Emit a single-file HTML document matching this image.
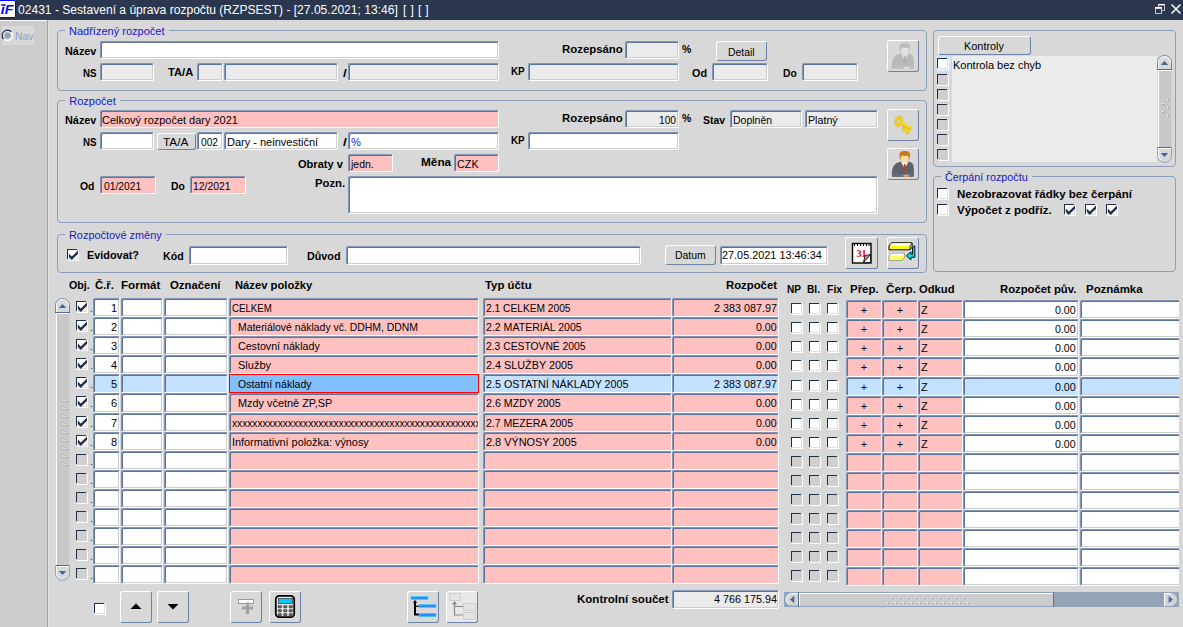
<!DOCTYPE html><html lang="cs"><head><meta charset="utf-8"><title>02431 - Sestavení a úprava rozpočtu</title><style>
*{box-sizing:border-box;margin:0;padding:0}
html,body{width:1183px;height:627px;overflow:hidden;background:#d8d8d8;font-family:"Liberation Sans",sans-serif;font-size:11px;color:#000}
.a{position:absolute}
#tt{left:18px;top:3px;color:#fff;font-size:12px;white-space:pre;line-height:14px}
.fr{border:1px solid #8c9db8;border-radius:4px}
.ft{color:#1616c8;background:#d8d8d8;padding:0 4px;line-height:13px;white-space:nowrap}
.l{font-weight:bold;white-space:nowrap;line-height:13px}
.f{background:#fff;border:1px solid;border-color:#8297b7 #fff #fff #8297b7;border-radius:2px;box-shadow:inset 1px 1px 0 #5b7397,inset -1px -1px 0 #cdcdcd;white-space:nowrap;overflow:hidden;line-height:13px;padding:3px 0 0 2px}
.d{background:#ebebeb}
.p{background:#ffc0c0;box-shadow:inset 1px 1px 0 #5b7397}
.s{background:#c4e1ff;box-shadow:inset 1px 1px 0 #5b7397}
.cl{border-right:0;border-radius:2px 0 0 2px;box-shadow:inset 1px 1px 0 #5b7397,inset 0 -1px 0 #cdcdcd}
.cur{background:#80c0ff;border:1px solid #f00;border-radius:0;box-shadow:none}
.n{text-align:right;padding-right:2px}
.bt{background:#d8d8d8;border:1px solid;border-color:#fff #6b82a6 #6b82a6 #fff;border-radius:3px;text-align:center;line-height:13px;white-space:nowrap}
.cb{width:12px;height:12px;background:linear-gradient(#222f48,#222f48) 0 0/10px 1px no-repeat,linear-gradient(#222f48,#222f48) 0 0/1px 10px no-repeat,linear-gradient(#fff,#fff) 1px 1px/9px 9px no-repeat,linear-gradient(#dedede,#dedede) 1px 1px/10px 10px no-repeat,linear-gradient(#fff,#fff) 1px 1px/11px 11px no-repeat}
.cbd{background:linear-gradient(#222f48,#222f48) 0 0/10px 1px no-repeat,linear-gradient(#222f48,#222f48) 0 0/1px 10px no-repeat,linear-gradient(#cfcfcf,#cfcfcf) 1px 1px/10px 10px no-repeat,linear-gradient(#fff,#fff) 1px 1px/11px 11px no-repeat}
.cb svg{position:absolute;left:1px;top:1px}
.t{white-space:nowrap;line-height:13px}
.c{transform-origin:0 50%;display:inline-block}
svg{display:block}
</style></head><body>
<div class="a " style="left:0px;top:0px;width:1183px;height:20px;background:#2a374e"></div>
<div class="a" id="tt" style="left:17.700px;transform-origin:0 50%;transform:scaleX(1.006)">02431 - Sestavení a úprava rozpočtu (RZPSEST) - [27.05.2021; 13:46]</div>
<div class="a" id="tt2" style="left:403.100px;top:3px;color:#fff;font-size:12px;white-space:pre;line-height:14px;letter-spacing:0.370px">[ ] [ ]</div>
<svg class="a" style="left:0px;top:0px" width="17" height="18" viewBox="0 0 17 18" ><rect x="0" y="0" width="16" height="18" fill="#fafaf2"/><path d="M0 0.500H15.500V17.500H0" fill="none" stroke="#0000ff" stroke-width="1"/><text x="0.800" y="14.300" font-family="Liberation Sans,sans-serif" font-size="13" font-weight="bold" font-style="italic" fill="#0808f0" textLength="12.500" lengthAdjust="spacingAndGlyphs">iF</text><path d="M1 4.900h4.500" stroke="#0808f0" stroke-width="1.300"/></svg>
<svg class="a" style="left:1150px;top:0px" width="33" height="20" viewBox="0 0 33 20" ><g fill="none"><path d="M8.500 5.500V10.500H14.500V5.500" stroke="#c4c4c4" stroke-width="1"/><path d="M8 4.700H15" stroke="#fff" stroke-width="1.500"/><rect x="5.500" y="8.500" width="6" height="5" fill="#2a374e" stroke="#c4c4c4" stroke-width="1"/><path d="M5 7.700H12" stroke="#fff" stroke-width="1.500"/><path d="M21.500 4.500l9 9M30.500 4.500l-9 9" stroke="#fff" stroke-width="1.500"/></g></svg>
<div class="a " style="left:0px;top:20px;width:47px;height:607px;background:#ccc;border-top:1px solid #fff"></div>
<div class="a " style="left:47px;top:20px;width:1px;height:607px;background:#94a5be"></div>
<div class="a " style="left:48px;top:21px;width:1px;height:606px;background:#e2e2e2"></div>
<div class="a " style="left:2px;top:26px;width:32px;height:19px;background:#d8d8d8"></div>
<svg class="a" style="left:1px;top:29px" width="13" height="13" viewBox="0 0 13 13" ><circle cx="6.500" cy="6.500" r="5" fill="#d8d8d8" stroke="#fff" stroke-width="1.200"/><path d="M2.600 10.200A5.200 5.200 0 0 1 10.400 2.800" fill="none" stroke="#1c2a44" stroke-width="1.200"/><circle cx="6.500" cy="6.500" r="3" fill="#93a2b8"/></svg>
<div class="a t" style="left:15.4px;top:30px;transform-origin:0 50%;transform:scaleX(0.9355);color:#8aa0c4">Nav</div>
<div class="a fr" style="left:57px;top:30px;width:870px;height:61px;"></div>
<div class="a ft" style="left:64.9px;top:25px;width:104px;overflow:hidden"><span class="c" style="transform:scaleX(1.0007)">Nadřízený rozpočet</span></div>
<div class="a l" style="left:65.1px;top:45px;transform-origin:0 50%;transform:scaleX(0.987);">Název</div>
<div class="a f" style="left:100px;top:41px;width:399px;height:18px;"></div>
<div class="a l" style="left:83.3px;top:67px;transform-origin:0 50%;transform:scaleX(0.8834);">NS</div>
<div class="a f d" style="left:100px;top:63px;width:54px;height:18px;"></div>
<div class="a l" style="left:168.2px;top:66px;transform-origin:0 50%;transform:scaleX(1.0143);">TA/A</div>
<div class="a f d" style="left:197px;top:63px;width:26px;height:18px;"></div>
<div class="a f d" style="left:224px;top:63px;width:114px;height:18px;"></div>
<div class="a l" style="left:343.0px;top:67px;transform-origin:0 50%;transform:scaleX(1.2408);">/</div>
<div class="a f d" style="left:348px;top:63px;width:151px;height:18px;"></div>
<div class="a l" style="left:511.0px;top:65px;transform-origin:0 50%;transform:scaleX(0.8965);">KP</div>
<div class="a f d" style="left:528px;top:63px;width:151px;height:18px;"></div>
<div class="a l" style="left:561.7px;top:43px;transform-origin:0 50%;transform:scaleX(1.036);">Rozepsáno</div>
<div class="a f d" style="left:625px;top:41px;width:54px;height:18px;"></div>
<div class="a l" style="left:682.2px;top:43px;transform-origin:0 50%;transform:scaleX(0.961);">%</div>
<div class="a bt" style="left:716px;top:41px;width:51px;height:20px;"></div>
<div class="a t" style="left:727.9px;top:46px;transform-origin:0 50%;transform:scaleX(0.9458);">Detail</div>
<div class="a l" style="left:691.8px;top:67px;transform-origin:0 50%;transform:scaleX(0.9816);">Od</div>
<div class="a f d" style="left:712px;top:63px;width:56px;height:18px;"></div>
<div class="a l" style="left:783.1px;top:67px;transform-origin:0 50%;transform:scaleX(0.9348);">Do</div>
<div class="a f d" style="left:802px;top:63px;width:56px;height:18px;"></div>
<div class="a bt" style="left:887px;top:40px;width:32px;height:32px;"></div>
<svg class="a" style="left:887px;top:40px" width="32" height="32" viewBox="0 0 32 32" ><g opacity="0.85"><path d="M5 28.700 C4.500 21 6 16.500 11 14.500 L14.500 13.500 L17.700 16 L21 13.500 L24.500 14.500 C27 16.500 27.200 21 26.700 28.700 Z" fill="#b4b4b4"/><path d="M5.500 24 C11 26.500 24 26.500 26.500 24 L26.500 28.700 L5.500 28.700Z" fill="#bababa"/><path d="M14 14.200 L17.700 20.500 L21.200 14.200 L17.700 13 Z" fill="#dedede"/><path d="M17 16 h1.400 l0.700 6 l-1.400 1.500 l-1.400 -1.500z" fill="#a8a8a8"/><ellipse cx="17.700" cy="10.200" rx="3.500" ry="4.200" fill="#e4e4e4"/><path d="M13.800 12.400 C12.500 9 11.500 5 14 3.800 C16 2.600 21 2.600 22.400 4.500 C23.600 6 22.800 10 21.800 12.400 C21.600 9 21.500 8 20.500 7.500 C18.500 8.300 16 8 14.800 7.600 C14 8.500 14 10 13.800 12.400Z" fill="#b8b8b8"/><path d="M15.800 27.800 q3.400 -2.600 6.900 0 l-1 0.900 h-5z" fill="#dcdcdc"/></g></svg>
<div class="a fr" style="left:57px;top:100px;width:870px;height:123px;"></div>
<div class="a ft" style="left:65.3px;top:95px;width:55px;overflow:hidden"><span class="c" style="transform:scaleX(1.0)">Rozpočet</span></div>
<div class="a l" style="left:65.1px;top:114px;transform-origin:0 50%;transform:scaleX(0.987);">Název</div>
<div class="a f p" style="left:100px;top:110px;width:399px;height:18px;"></div>
<div class="a t" style="left:102.4px;top:114px;transform-origin:0 50%;transform:scaleX(0.9961);">Celkový rozpočet dary 2021</div>
<div class="a l" style="left:83.3px;top:136px;transform-origin:0 50%;transform:scaleX(0.8834);">NS</div>
<div class="a f" style="left:100px;top:132px;width:54px;height:18px;"></div>
<div class="a bt" style="left:157px;top:133px;width:39px;height:17px;"></div>
<div class="a t" style="left:163.0px;top:136px;transform-origin:0 50%;transform:scaleX(1.0695);">TA/A</div>
<div class="a f" style="left:197px;top:132px;width:26px;height:18px;"></div>
<div class="a t" style="left:200.5px;top:136px;transform-origin:0 50%;transform:scaleX(0.9252);">002</div>
<div class="a f" style="left:224px;top:132px;width:114px;height:18px;"></div>
<div class="a t" style="left:226.6px;top:136px;transform-origin:0 50%;transform:scaleX(0.9997);">Dary - neinvestiční</div>
<div class="a l" style="left:343.0px;top:136px;transform-origin:0 50%;transform:scaleX(1.2408);">/</div>
<div class="a f" style="left:348px;top:132px;width:151px;height:18px;"></div>
<div class="a t" style="left:351.2px;top:136px;transform-origin:0 50%;transform:scaleX(1.0121);color:#1414e6">%</div>
<div class="a l" style="left:511.0px;top:134px;transform-origin:0 50%;transform:scaleX(0.8965);">KP</div>
<div class="a f" style="left:528px;top:132px;width:151px;height:18px;"></div>
<div class="a l" style="left:561.7px;top:112px;transform-origin:0 50%;transform:scaleX(1.036);">Rozepsáno</div>
<div class="a f d" style="left:625px;top:110px;width:54px;height:18px;"></div>
<div class="a t" style="left:658.6px;top:114px;transform-origin:0 50%;transform:scaleX(0.9252);">100</div>
<div class="a l" style="left:682.2px;top:112px;transform-origin:0 50%;transform:scaleX(0.961);">%</div>
<div class="a l" style="left:702.5px;top:114px;transform-origin:0 50%;transform:scaleX(0.9462);">Stav</div>
<div class="a f d" style="left:730px;top:110px;width:72px;height:18px;"></div>
<div class="a t" style="left:732.5px;top:114px;transform-origin:0 50%;transform:scaleX(0.9537);">Doplněn</div>
<div class="a f d" style="left:805px;top:110px;width:73px;height:18px;"></div>
<div class="a t" style="left:808.4px;top:114px;transform-origin:0 50%;transform:scaleX(0.9708);">Platný</div>
<div class="a bt" style="left:887px;top:109px;width:32px;height:32px;"></div>
<svg class="a" style="left:887px;top:109px" width="32" height="32" viewBox="0 0 32 32" ><g fill="#f6d41c" stroke="#d8ac08" stroke-width="0.500"><path d="M14 11.800 L24.600 18.200 L23.400 20.600 L13.400 15.200Z"/><path d="M15.800 17.200 L15 21 L17.500 22.200 L18.200 20.200 L19.600 21 L19 24 L21.600 25 L23.400 20.400Z"/><path fill-rule="evenodd" transform="rotate(14 11.800 12.500)" d="M8 12.500 a3.800 5.300 0 1 0 7.600 0 a3.800 5.300 0 1 0 -7.600 0z M10.200 12.500 a1.500 2.700 0 1 0 3 0 a1.500 2.700 0 1 0 -3 0z"/></g><path d="M14.500 12.800 L24 18.600" stroke="#ffec60" stroke-width="0.900" fill="none"/></svg>
<div class="a bt" style="left:887px;top:148px;width:32px;height:32px;"></div>
<svg class="a" style="left:887px;top:148px" width="32" height="32" viewBox="0 0 32 32" ><path d="M5 28.700 C4.500 21 6 16.500 11 14.500 L14.500 13.500 L17.700 16 L21 13.500 L24.500 14.500 C27 16.500 27.200 21 26.700 28.700 Z" fill="#5d636b"/><path d="M5.500 24 C11 26.500 24 26.500 26.500 24 L26.500 28.700 L5.500 28.700Z" fill="#666c74"/><path d="M14 14.200 L17.700 20.500 L21.200 14.200 L17.700 13 Z" fill="#f4f4f4"/><path d="M17 16 h1.400 l0.700 6 l-1.400 1.500 l-1.400 -1.500z" fill="#d03018"/><ellipse cx="17.700" cy="10.200" rx="3.500" ry="4.200" fill="#ffdc9c"/><path d="M13.800 12.400 C12.500 9 11.500 5 14 3.800 C16 2.600 21 2.600 22.400 4.500 C23.600 6 22.800 10 21.800 12.400 C21.600 9 21.500 8 20.500 7.500 C18.500 8.300 16 8 14.800 7.600 C14 8.500 14 10 13.800 12.400Z" fill="#c47a24"/><path d="M15.800 27.800 q3.400 -2.600 6.900 0 l-1 0.900 h-5z" fill="#f0a060"/></svg>
<div class="a l" style="left:297.7px;top:158px;transform-origin:0 50%;transform:scaleX(1.0055);">Obraty v</div>
<div class="a f p" style="left:348px;top:154px;width:45px;height:18px;"></div>
<div class="a t" style="left:350.6px;top:158px;transform-origin:0 50%;transform:scaleX(0.955);">jedn.</div>
<div class="a l" style="left:420.6px;top:156px;transform-origin:0 50%;transform:scaleX(1.0738);">Měna</div>
<div class="a f p" style="left:454px;top:154px;width:45px;height:18px;"></div>
<div class="a t" style="left:456.6px;top:158px;transform-origin:0 50%;transform:scaleX(0.9818);">CZK</div>
<div class="a l" style="left:80.0px;top:180px;transform-origin:0 50%;transform:scaleX(0.9489);">Od</div>
<div class="a f p" style="left:100px;top:176px;width:56px;height:18px;"></div>
<div class="a t" style="left:103.7px;top:180px;transform-origin:0 50%;transform:scaleX(0.9369);">01/2021</div>
<div class="a l" style="left:170.9px;top:180px;transform-origin:0 50%;transform:scaleX(0.9416);">Do</div>
<div class="a f p" style="left:190px;top:176px;width:56px;height:18px;"></div>
<div class="a t" style="left:193.3px;top:180px;transform-origin:0 50%;transform:scaleX(0.9469);">12/2021</div>
<div class="a l" style="left:314.6px;top:177px;transform-origin:0 50%;transform:scaleX(1.0258);">Pozn.</div>
<div class="a f" style="left:348px;top:176px;width:530px;height:38px;"></div>
<div class="a fr" style="left:57px;top:234px;width:870px;height:39px;"></div>
<div class="a ft" style="left:65.3px;top:229px;width:101px;overflow:hidden"><span class="c" style="transform:scaleX(0.9905)">Rozpočtové změny</span></div>
<div class="a cb" style="left:67px;top:249px;"><svg width="11" height="11" viewBox="0 0 11 11" style="overflow:visible"><path d="M0.800 3.600 V7 L3.800 10 L10 3.800 V0.400 L3.800 6.600Z" fill="#22304a"/></svg></div>
<div class="a l" style="left:86.9px;top:249px;transform-origin:0 50%;transform:scaleX(0.9887);">Evidovat?</div>
<div class="a l" style="left:163.0px;top:250px;transform-origin:0 50%;transform:scaleX(0.9637);">Kód</div>
<div class="a f" style="left:189px;top:246px;width:99px;height:19px;"></div>
<div class="a l" style="left:307.0px;top:250px;transform-origin:0 50%;transform:scaleX(0.979);">Důvod</div>
<div class="a f" style="left:346px;top:246px;width:295px;height:19px;"></div>
<div class="a bt" style="left:665px;top:245px;width:51px;height:20px;"></div>
<div class="a t" style="left:674.7px;top:249px;transform-origin:0 50%;transform:scaleX(0.9473);">Datum</div>
<div class="a f" style="left:720px;top:246px;width:108px;height:19px;"></div>
<div class="a t" style="left:722.2px;top:249px;transform-origin:0 50%;transform:scaleX(0.9885);">27.05.2021 13:46:34</div>
<div class="a bt" style="left:845px;top:237px;width:33px;height:32px;"></div>
<svg class="a" style="left:846px;top:237px" width="32" height="32" viewBox="0 0 32 32" ><rect x="6.500" y="6.500" width="18.500" height="19.500" fill="#fff" stroke="#000" stroke-width="1.400"/><path d="M8.500 7v2M11.500 7v2M14.500 7v2M17.500 7v2M20.500 7v2M23 7v2" stroke="#000" stroke-width="1"/><text x="10.500" y="20" font-family="Liberation Serif,serif" font-weight="bold" font-size="10" fill="#f00000">31</text><path d="M17.500 25.500 L19 18.500 L24.500 17.500 Z" fill="#a8a8a8" stroke="#000" stroke-width="0.800"/><path d="M17.500 25.500 L24.500 17.500 V25.500Z" fill="#fff" stroke="#000" stroke-width="0.800"/></svg>
<div class="a bt" style="left:887px;top:237px;width:32px;height:32px;"></div>
<svg class="a" style="left:887px;top:237px" width="32" height="32" viewBox="0 0 32 32" ><path d="M2 9 L4.500 5.800 H25 V10 L22.800 12.800 H2Z" fill="#ff0" stroke="#000" stroke-width="1"/><path d="M2.600 8.800 L4.800 6.300 H24.300 L22.300 8.800Z" fill="#fff"/><path d="M22.800 9 L25 6.300 V10 L22.800 12.800Z" fill="#e8a8d0" stroke="#000" stroke-width="0.600"/><path d="M2 19.400 L4.300 16.200 H17.500 V20.600 L15.300 23.400 H2Z" fill="#ffff30" stroke="#909090" stroke-width="0.800"/><path d="M2.500 19.200 L4.600 16.700 H17 L15 19.200Z" fill="#fff"/><path d="M2.800 20.500h12M3.300 22h12" stroke="#fff" stroke-width="0.900" stroke-dasharray="1 1"/><path d="M25.500 10.500 L27.800 8.800 V20.300 H24 V22.800 L19.300 18.800 L24 14.800 V17.300 H25.500Z" fill="#00e0f0" stroke="#000" stroke-width="0.900"/></svg>
<div class="a fr" style="left:933px;top:30px;width:243px;height:137px;"></div>
<div class="a bt" style="left:938px;top:36px;width:93px;height:19px;"></div>
<div class="a t" style="left:964.1px;top:40px;transform-origin:0 50%;transform:scaleX(0.9907);">Kontroly</div>
<div class="a " style="left:952px;top:56px;width:205px;height:106px;background:#ebebeb"></div>
<div class="a " style="left:936px;top:56px;width:15px;height:16px;background:#cfe3fb"></div>
<div class="a cb" style="left:937px;top:58px;"></div>
<div class="a cb cbd" style="left:937px;top:74px;"></div>
<div class="a cb cbd" style="left:937px;top:89px;"></div>
<div class="a cb cbd" style="left:937px;top:104px;"></div>
<div class="a cb cbd" style="left:937px;top:119px;"></div>
<div class="a cb cbd" style="left:937px;top:134px;"></div>
<div class="a cb cbd" style="left:937px;top:149px;"></div>
<div class="a t" style="left:952.8px;top:59px;transform-origin:0 50%;transform:scaleX(1.002);">Kontrola bez chyb</div>
<svg class="a" style="left:1157px;top:55px" width="15" height="108" viewBox="0 0 15 108" ><rect x="1" y="8" width="1" height="92" fill="#fff"/><rect x="2" y="8" width="12" height="92" fill="#c8c8c8"/><rect x="14" y="8" width="1" height="92" fill="#d2d2d2"/><path d="M0.500 14.500 V7.500 A7 7 0 0 1 14.500 7.500 V14.500 Z" fill="#d8d8d8" stroke="#6d85ab" stroke-width="1"/><path d="M1.500 14 V7.500 A6 6 0 0 1 13.500 7.500" fill="none" stroke="#fff" stroke-width="1"/><path d="M0 14.500 H15" stroke="#4d6a99" stroke-width="1"/><path d="M1 15.500 H14" stroke="#fff" stroke-width="1"/><path d="M7.500 6 L11.200 10 H3.800Z" fill="#4a6592"/><path d="M0.500 92.5 V100.5 A7 7 0 0 0 14.500 100.5 V92.5 Z" fill="#d8d8d8" stroke="#8ea2c2" stroke-width="1"/><path d="M1.500 93 V100.5 A6 6 0 0 0 4 105" fill="none" stroke="#fff" stroke-width="1"/><path d="M1 92.5 H14" stroke="#4d6a99" stroke-width="1"/><path d="M2 93.5 H14" stroke="#fff" stroke-width="1"/><path d="M7.500 102 L11.200 98 H3.800Z" fill="#4a6592"/><rect x="10" y="44" width="1" height="1" fill="#fff"/><rect x="11" y="45" width="1" height="1" fill="#7388ab"/><rect x="5" y="48" width="1" height="1" fill="#fff"/><rect x="6" y="49" width="1" height="1" fill="#7388ab"/><rect x="10" y="52" width="1" height="1" fill="#fff"/><rect x="11" y="53" width="1" height="1" fill="#7388ab"/><rect x="5" y="56" width="1" height="1" fill="#fff"/><rect x="6" y="57" width="1" height="1" fill="#7388ab"/><rect x="10" y="60" width="1" height="1" fill="#fff"/><rect x="11" y="61" width="1" height="1" fill="#7388ab"/></svg>
<div class="a fr" style="left:933px;top:176px;width:243px;height:96px;"></div>
<div class="a ft" style="left:941.2px;top:171px;width:91px;overflow:hidden"><span class="c" style="transform:scaleX(0.9794)">Čerpání rozpočtu</span></div>
<div class="a cb" style="left:937px;top:188px;"></div>
<div class="a l" style="left:956.9px;top:188px;transform-origin:0 50%;transform:scaleX(1.0442);">Nezobrazovat řádky bez čerpání</div>
<div class="a cb" style="left:937px;top:204px;"></div>
<div class="a l" style="left:956.9px;top:204px;transform-origin:0 50%;transform:scaleX(1.0464);">Výpočet z podříz.</div>
<div class="a cb" style="left:1064px;top:204px;"><svg width="11" height="11" viewBox="0 0 11 11" style="overflow:visible"><path d="M0.800 3.600 V7 L3.800 10 L10 3.800 V0.400 L3.800 6.600Z" fill="#22304a"/></svg></div>
<div class="a cb" style="left:1085px;top:204px;"><svg width="11" height="11" viewBox="0 0 11 11" style="overflow:visible"><path d="M0.800 3.600 V7 L3.800 10 L10 3.800 V0.400 L3.800 6.600Z" fill="#22304a"/></svg></div>
<div class="a cb" style="left:1106px;top:204px;"><svg width="11" height="11" viewBox="0 0 11 11" style="overflow:visible"><path d="M0.800 3.600 V7 L3.800 10 L10 3.800 V0.400 L3.800 6.600Z" fill="#22304a"/></svg></div>
<div class="a l" style="left:69.1px;top:279px;transform-origin:0 50%;transform:scaleX(0.9717);">Obj.</div>
<div class="a l" style="left:95.2px;top:279px;transform-origin:0 50%;transform:scaleX(1.0303);">Č.ř.</div>
<div class="a l" style="left:120.6px;top:279px;transform-origin:0 50%;transform:scaleX(1.0541);">Formát</div>
<div class="a l" style="left:169.6px;top:279px;transform-origin:0 50%;transform:scaleX(1.0319);">Označení</div>
<div class="a l" style="left:235.2px;top:279px;transform-origin:0 50%;transform:scaleX(1.0205);">Název položky</div>
<div class="a l" style="left:484.9px;top:279px;transform-origin:0 50%;transform:scaleX(1.0348);">Typ účtu</div>
<div class="a l" style="left:726.1px;top:279px;transform-origin:0 50%;transform:scaleX(1.0303);">Rozpočet</div>
<div class="a l" style="left:787.1px;top:283px;transform-origin:0 50%;transform:scaleX(0.9162);">NP</div>
<div class="a l" style="left:807.1px;top:283px;transform-origin:0 50%;transform:scaleX(0.9244);">Bl.</div>
<div class="a l" style="left:827.0px;top:283px;transform-origin:0 50%;transform:scaleX(0.9493);">Fix</div>
<div class="a l" style="left:850.3px;top:283px;transform-origin:0 50%;transform:scaleX(1.0425);">Přep.</div>
<div class="a l" style="left:885.9px;top:283px;transform-origin:0 50%;transform:scaleX(1.0667);">Čerp.</div>
<div class="a l" style="left:918.9px;top:283px;transform-origin:0 50%;transform:scaleX(1.0188);">Odkud</div>
<div class="a l" style="left:999.8px;top:283px;transform-origin:0 50%;transform:scaleX(1.0259);">Rozpočet pův.</div>
<div class="a l" style="left:1086.1px;top:283px;transform-origin:0 50%;transform:scaleX(1.0397);">Poznámka</div>
<div class="a cb" style="left:76px;top:301px;"><svg width="11" height="11" viewBox="0 0 11 11" style="overflow:visible"><path d="M0.800 3.600 V7 L3.800 10 L10 3.800 V0.400 L3.800 6.600Z" fill="#22304a"/></svg></div>
<div class="a t" style="left:90px;top:302px;color:#401850">.</div>
<div class="a f n " style="left:93px;top:298px;width:27px;height:19px;">1</div>
<div class="a f " style="left:121px;top:298px;width:42px;height:19px;"></div>
<div class="a f " style="left:164px;top:298px;width:64px;height:19px;"></div>
<div class="a f p" style="left:229px;top:298px;width:250px;height:19px;padding-left:2px"><span class="c" style="transform:scaleX(0.8796);margin-left:0px">CELKEM</span></div>
<div class="a f p" style="left:483px;top:298px;width:189px;height:19px;padding-left:2px"><span class="c" style="transform:scaleX(0.9278);margin-left:0px">2.1 CELKEM 2005</span></div>
<div class="a f p" style="left:672px;top:298px;width:107px;height:19px;"></div>
<div class="a t" style="left:713.6px;top:302px;transform-origin:0 50%;transform:scaleX(0.9796);">2 383 087.97</div>
<div class="a cb" style="left:791px;top:303px;"></div>
<div class="a cb" style="left:809px;top:303px;"></div>
<div class="a cb" style="left:827px;top:303px;"></div>
<div class="a f p" style="left:846px;top:300px;width:36px;height:19px;text-align:center;padding-left:0">+</div>
<div class="a f p" style="left:882px;top:300px;width:36px;height:19px;text-align:center;padding-left:0">+</div>
<div class="a f p" style="left:918px;top:300px;width:45px;height:19px;">Z</div>
<div class="a f " style="left:963px;top:300px;width:116px;height:19px;"></div>
<div class="a t" style="left:1055.1px;top:304px;transform-origin:0 50%;transform:scaleX(0.9656);">0.00</div>
<div class="a f  cl" style="left:1080px;top:300px;width:99px;height:19px;"></div>
<div class="a cb" style="left:76px;top:320px;"><svg width="11" height="11" viewBox="0 0 11 11" style="overflow:visible"><path d="M0.800 3.600 V7 L3.800 10 L10 3.800 V0.400 L3.800 6.600Z" fill="#22304a"/></svg></div>
<div class="a t" style="left:90px;top:321px;color:#401850">.</div>
<div class="a f n " style="left:93px;top:317px;width:27px;height:19px;">2</div>
<div class="a f " style="left:121px;top:317px;width:42px;height:19px;"></div>
<div class="a f " style="left:164px;top:317px;width:64px;height:19px;"></div>
<div class="a f p" style="left:229px;top:317px;width:250px;height:19px;padding-left:2px"><span class="c" style="transform:scaleX(0.9467);margin-left:6px">Materiálové náklady vč. DDHM, DDNM</span></div>
<div class="a f p" style="left:483px;top:317px;width:189px;height:19px;padding-left:2px"><span class="c" style="transform:scaleX(0.9604);margin-left:0px">2.2 MATERIÁL 2005</span></div>
<div class="a f p" style="left:672px;top:317px;width:107px;height:19px;"></div>
<div class="a t" style="left:755.9px;top:321px;transform-origin:0 50%;transform:scaleX(0.9656);">0.00</div>
<div class="a cb" style="left:791px;top:322px;"></div>
<div class="a cb" style="left:809px;top:322px;"></div>
<div class="a cb" style="left:827px;top:322px;"></div>
<div class="a f p" style="left:846px;top:319px;width:36px;height:19px;text-align:center;padding-left:0">+</div>
<div class="a f p" style="left:882px;top:319px;width:36px;height:19px;text-align:center;padding-left:0">+</div>
<div class="a f p" style="left:918px;top:319px;width:45px;height:19px;">Z</div>
<div class="a f " style="left:963px;top:319px;width:116px;height:19px;"></div>
<div class="a t" style="left:1055.1px;top:323px;transform-origin:0 50%;transform:scaleX(0.9656);">0.00</div>
<div class="a f  cl" style="left:1080px;top:319px;width:99px;height:19px;"></div>
<div class="a cb" style="left:76px;top:339px;"><svg width="11" height="11" viewBox="0 0 11 11" style="overflow:visible"><path d="M0.800 3.600 V7 L3.800 10 L10 3.800 V0.400 L3.800 6.600Z" fill="#22304a"/></svg></div>
<div class="a t" style="left:90px;top:340px;color:#401850">.</div>
<div class="a f n " style="left:93px;top:336px;width:27px;height:19px;">3</div>
<div class="a f " style="left:121px;top:336px;width:42px;height:19px;"></div>
<div class="a f " style="left:164px;top:336px;width:64px;height:19px;"></div>
<div class="a f p" style="left:229px;top:336px;width:250px;height:19px;padding-left:2px"><span class="c" style="transform:scaleX(0.9688);margin-left:6px">Cestovní náklady</span></div>
<div class="a f p" style="left:483px;top:336px;width:189px;height:19px;padding-left:2px"><span class="c" style="transform:scaleX(0.9373);margin-left:0px">2.3 CESTOVNÉ 2005</span></div>
<div class="a f p" style="left:672px;top:336px;width:107px;height:19px;"></div>
<div class="a t" style="left:755.9px;top:340px;transform-origin:0 50%;transform:scaleX(0.9656);">0.00</div>
<div class="a cb" style="left:791px;top:341px;"></div>
<div class="a cb" style="left:809px;top:341px;"></div>
<div class="a cb" style="left:827px;top:341px;"></div>
<div class="a f p" style="left:846px;top:338px;width:36px;height:19px;text-align:center;padding-left:0">+</div>
<div class="a f p" style="left:882px;top:338px;width:36px;height:19px;text-align:center;padding-left:0">+</div>
<div class="a f p" style="left:918px;top:338px;width:45px;height:19px;">Z</div>
<div class="a f " style="left:963px;top:338px;width:116px;height:19px;"></div>
<div class="a t" style="left:1055.1px;top:342px;transform-origin:0 50%;transform:scaleX(0.9656);">0.00</div>
<div class="a f  cl" style="left:1080px;top:338px;width:99px;height:19px;"></div>
<div class="a cb" style="left:76px;top:358px;"><svg width="11" height="11" viewBox="0 0 11 11" style="overflow:visible"><path d="M0.800 3.600 V7 L3.800 10 L10 3.800 V0.400 L3.800 6.600Z" fill="#22304a"/></svg></div>
<div class="a t" style="left:90px;top:359px;color:#401850">.</div>
<div class="a f n " style="left:93px;top:355px;width:27px;height:19px;">4</div>
<div class="a f " style="left:121px;top:355px;width:42px;height:19px;"></div>
<div class="a f " style="left:164px;top:355px;width:64px;height:19px;"></div>
<div class="a f p" style="left:229px;top:355px;width:250px;height:19px;padding-left:2px"><span class="c" style="transform:scaleX(1.0021);margin-left:6px">Služby</span></div>
<div class="a f p" style="left:483px;top:355px;width:189px;height:19px;padding-left:2px"><span class="c" style="transform:scaleX(0.9837);margin-left:0px">2.4 SLUŽBY 2005</span></div>
<div class="a f p" style="left:672px;top:355px;width:107px;height:19px;"></div>
<div class="a t" style="left:755.9px;top:359px;transform-origin:0 50%;transform:scaleX(0.9656);">0.00</div>
<div class="a cb" style="left:791px;top:360px;"></div>
<div class="a cb" style="left:809px;top:360px;"></div>
<div class="a cb" style="left:827px;top:360px;"></div>
<div class="a f p" style="left:846px;top:357px;width:36px;height:20px;text-align:center;padding-left:0">+</div>
<div class="a f p" style="left:882px;top:357px;width:36px;height:20px;text-align:center;padding-left:0">+</div>
<div class="a f p" style="left:918px;top:357px;width:45px;height:20px;">Z</div>
<div class="a f " style="left:963px;top:357px;width:116px;height:20px;"></div>
<div class="a t" style="left:1055.1px;top:361px;transform-origin:0 50%;transform:scaleX(0.9656);">0.00</div>
<div class="a f  cl" style="left:1080px;top:357px;width:99px;height:20px;"></div>
<div class="a cb" style="left:76px;top:377px;"><svg width="11" height="11" viewBox="0 0 11 11" style="overflow:visible"><path d="M0.800 3.600 V7 L3.800 10 L10 3.800 V0.400 L3.800 6.600Z" fill="#22304a"/></svg></div>
<div class="a t" style="left:90px;top:378px;color:#401850">.</div>
<div class="a f n s" style="left:93px;top:374px;width:27px;height:19px;">5</div>
<div class="a f s" style="left:121px;top:374px;width:42px;height:19px;"></div>
<div class="a f s" style="left:164px;top:374px;width:64px;height:19px;"></div>
<div class="a f cur" style="left:229px;top:374px;width:250px;height:19px;padding:3px 0 0 2px"><span class="c" style="transform:scaleX(0.9634);margin-left:6px">Ostatní náklady</span></div>
<div class="a f s" style="left:483px;top:374px;width:189px;height:19px;padding-left:2px"><span class="c" style="transform:scaleX(0.9751);margin-left:0px">2.5 OSTATNÍ NÁKLADY 2005</span></div>
<div class="a f s" style="left:672px;top:374px;width:107px;height:19px;"></div>
<div class="a t" style="left:713.6px;top:378px;transform-origin:0 50%;transform:scaleX(0.9796);">2 383 087.97</div>
<div class="a cb" style="left:791px;top:380px;"></div>
<div class="a cb" style="left:809px;top:380px;"></div>
<div class="a cb" style="left:827px;top:380px;"></div>
<div class="a f s" style="left:846px;top:377px;width:36px;height:19px;text-align:center;padding-left:0">+</div>
<div class="a f s" style="left:882px;top:377px;width:36px;height:19px;text-align:center;padding-left:0">+</div>
<div class="a f s" style="left:918px;top:377px;width:45px;height:19px;">Z</div>
<div class="a f s" style="left:963px;top:377px;width:116px;height:19px;"></div>
<div class="a t" style="left:1055.1px;top:381px;transform-origin:0 50%;transform:scaleX(0.9656);">0.00</div>
<div class="a f s cl" style="left:1080px;top:377px;width:99px;height:19px;"></div>
<div class="a cb" style="left:76px;top:396px;"><svg width="11" height="11" viewBox="0 0 11 11" style="overflow:visible"><path d="M0.800 3.600 V7 L3.800 10 L10 3.800 V0.400 L3.800 6.600Z" fill="#22304a"/></svg></div>
<div class="a t" style="left:90px;top:397px;color:#401850">.</div>
<div class="a f n " style="left:93px;top:393px;width:27px;height:20px;">6</div>
<div class="a f " style="left:121px;top:393px;width:42px;height:20px;"></div>
<div class="a f " style="left:164px;top:393px;width:64px;height:20px;"></div>
<div class="a f p" style="left:229px;top:393px;width:250px;height:20px;padding-left:2px"><span class="c" style="transform:scaleX(0.9902);margin-left:6px">Mzdy včetně ZP,SP</span></div>
<div class="a f p" style="left:483px;top:393px;width:189px;height:20px;padding-left:2px"><span class="c" style="transform:scaleX(0.9715);margin-left:0px">2.6 MZDY 2005</span></div>
<div class="a f p" style="left:672px;top:393px;width:107px;height:20px;"></div>
<div class="a t" style="left:755.9px;top:397px;transform-origin:0 50%;transform:scaleX(0.9656);">0.00</div>
<div class="a cb" style="left:791px;top:399px;"></div>
<div class="a cb" style="left:809px;top:399px;"></div>
<div class="a cb" style="left:827px;top:399px;"></div>
<div class="a f p" style="left:846px;top:396px;width:36px;height:19px;text-align:center;padding-left:0">+</div>
<div class="a f p" style="left:882px;top:396px;width:36px;height:19px;text-align:center;padding-left:0">+</div>
<div class="a f p" style="left:918px;top:396px;width:45px;height:19px;">Z</div>
<div class="a f " style="left:963px;top:396px;width:116px;height:19px;"></div>
<div class="a t" style="left:1055.1px;top:400px;transform-origin:0 50%;transform:scaleX(0.9656);">0.00</div>
<div class="a f  cl" style="left:1080px;top:396px;width:99px;height:19px;"></div>
<div class="a cb" style="left:76px;top:416px;"><svg width="11" height="11" viewBox="0 0 11 11" style="overflow:visible"><path d="M0.800 3.600 V7 L3.800 10 L10 3.800 V0.400 L3.800 6.600Z" fill="#22304a"/></svg></div>
<div class="a t" style="left:90px;top:417px;color:#401850">.</div>
<div class="a f n " style="left:93px;top:413px;width:27px;height:19px;">7</div>
<div class="a f " style="left:121px;top:413px;width:42px;height:19px;"></div>
<div class="a f " style="left:164px;top:413px;width:64px;height:19px;"></div>
<div class="a f p" style="left:229px;top:413px;width:250px;height:19px;padding-left:2px"><span class="c" style="transform:scaleX(0.9229);margin-left:0px">xxxxxxxxxxxxxxxxxxxxxxxxxxxxxxxxxxxxxxxxxxxxxxxxxx</span></div>
<div class="a f p" style="left:483px;top:413px;width:189px;height:19px;padding-left:2px"><span class="c" style="transform:scaleX(0.9553);margin-left:0px">2.7 MEZERA 2005</span></div>
<div class="a f p" style="left:672px;top:413px;width:107px;height:19px;"></div>
<div class="a t" style="left:755.9px;top:417px;transform-origin:0 50%;transform:scaleX(0.9656);">0.00</div>
<div class="a cb" style="left:791px;top:418px;"></div>
<div class="a cb" style="left:809px;top:418px;"></div>
<div class="a cb" style="left:827px;top:418px;"></div>
<div class="a f p" style="left:846px;top:415px;width:36px;height:19px;text-align:center;padding-left:0">+</div>
<div class="a f p" style="left:882px;top:415px;width:36px;height:19px;text-align:center;padding-left:0">+</div>
<div class="a f p" style="left:918px;top:415px;width:45px;height:19px;">Z</div>
<div class="a f " style="left:963px;top:415px;width:116px;height:19px;"></div>
<div class="a t" style="left:1055.1px;top:419px;transform-origin:0 50%;transform:scaleX(0.9656);">0.00</div>
<div class="a f  cl" style="left:1080px;top:415px;width:99px;height:19px;"></div>
<div class="a cb" style="left:76px;top:435px;"><svg width="11" height="11" viewBox="0 0 11 11" style="overflow:visible"><path d="M0.800 3.600 V7 L3.800 10 L10 3.800 V0.400 L3.800 6.600Z" fill="#22304a"/></svg></div>
<div class="a t" style="left:90px;top:436px;color:#401850">.</div>
<div class="a f n " style="left:93px;top:432px;width:27px;height:19px;">8</div>
<div class="a f " style="left:121px;top:432px;width:42px;height:19px;"></div>
<div class="a f " style="left:164px;top:432px;width:64px;height:19px;"></div>
<div class="a f p" style="left:229px;top:432px;width:250px;height:19px;padding-left:2px"><span class="c" style="transform:scaleX(0.9851);margin-left:0px">Informativní položka: výnosy</span></div>
<div class="a f p" style="left:483px;top:432px;width:189px;height:19px;padding-left:2px"><span class="c" style="transform:scaleX(0.9912);margin-left:0px">2.8 VÝNOSY 2005</span></div>
<div class="a f p" style="left:672px;top:432px;width:107px;height:19px;"></div>
<div class="a t" style="left:755.9px;top:436px;transform-origin:0 50%;transform:scaleX(0.9656);">0.00</div>
<div class="a cb" style="left:791px;top:437px;"></div>
<div class="a cb" style="left:809px;top:437px;"></div>
<div class="a cb" style="left:827px;top:437px;"></div>
<div class="a f p" style="left:846px;top:434px;width:36px;height:19px;text-align:center;padding-left:0">+</div>
<div class="a f p" style="left:882px;top:434px;width:36px;height:19px;text-align:center;padding-left:0">+</div>
<div class="a f p" style="left:918px;top:434px;width:45px;height:19px;">Z</div>
<div class="a f " style="left:963px;top:434px;width:116px;height:19px;"></div>
<div class="a t" style="left:1055.1px;top:438px;transform-origin:0 50%;transform:scaleX(0.9656);">0.00</div>
<div class="a f  cl" style="left:1080px;top:434px;width:99px;height:19px;"></div>
<div class="a cb cbd" style="left:76px;top:454px;"></div>
<div class="a t" style="left:90px;top:455px;color:#401850">.</div>
<div class="a f n " style="left:93px;top:451px;width:27px;height:19px;"></div>
<div class="a f " style="left:121px;top:451px;width:42px;height:19px;"></div>
<div class="a f " style="left:164px;top:451px;width:64px;height:19px;"></div>
<div class="a f p" style="left:229px;top:451px;width:250px;height:19px;padding-left:2px"></div>
<div class="a f p" style="left:483px;top:451px;width:189px;height:19px;padding-left:2px"></div>
<div class="a f p" style="left:672px;top:451px;width:107px;height:19px;"></div>
<div class="a cb cbd" style="left:791px;top:456px;"></div>
<div class="a cb cbd" style="left:809px;top:456px;"></div>
<div class="a cb cbd" style="left:827px;top:456px;"></div>
<div class="a f p" style="left:846px;top:453px;width:36px;height:19px;text-align:center;padding-left:0"></div>
<div class="a f p" style="left:882px;top:453px;width:36px;height:19px;text-align:center;padding-left:0"></div>
<div class="a f p" style="left:918px;top:453px;width:45px;height:19px;"></div>
<div class="a f " style="left:963px;top:453px;width:116px;height:19px;"></div>
<div class="a f  cl" style="left:1080px;top:453px;width:99px;height:19px;"></div>
<div class="a cb cbd" style="left:76px;top:473px;"></div>
<div class="a t" style="left:90px;top:474px;color:#401850">.</div>
<div class="a f n " style="left:93px;top:470px;width:27px;height:19px;"></div>
<div class="a f " style="left:121px;top:470px;width:42px;height:19px;"></div>
<div class="a f " style="left:164px;top:470px;width:64px;height:19px;"></div>
<div class="a f p" style="left:229px;top:470px;width:250px;height:19px;padding-left:2px"></div>
<div class="a f p" style="left:483px;top:470px;width:189px;height:19px;padding-left:2px"></div>
<div class="a f p" style="left:672px;top:470px;width:107px;height:19px;"></div>
<div class="a cb cbd" style="left:791px;top:475px;"></div>
<div class="a cb cbd" style="left:809px;top:475px;"></div>
<div class="a cb cbd" style="left:827px;top:475px;"></div>
<div class="a f p" style="left:846px;top:472px;width:36px;height:19px;text-align:center;padding-left:0"></div>
<div class="a f p" style="left:882px;top:472px;width:36px;height:19px;text-align:center;padding-left:0"></div>
<div class="a f p" style="left:918px;top:472px;width:45px;height:19px;"></div>
<div class="a f " style="left:963px;top:472px;width:116px;height:19px;"></div>
<div class="a f  cl" style="left:1080px;top:472px;width:99px;height:19px;"></div>
<div class="a cb cbd" style="left:76px;top:492px;"></div>
<div class="a t" style="left:90px;top:493px;color:#401850">.</div>
<div class="a f n " style="left:93px;top:489px;width:27px;height:19px;"></div>
<div class="a f " style="left:121px;top:489px;width:42px;height:19px;"></div>
<div class="a f " style="left:164px;top:489px;width:64px;height:19px;"></div>
<div class="a f p" style="left:229px;top:489px;width:250px;height:19px;padding-left:2px"></div>
<div class="a f p" style="left:483px;top:489px;width:189px;height:19px;padding-left:2px"></div>
<div class="a f p" style="left:672px;top:489px;width:107px;height:19px;"></div>
<div class="a cb cbd" style="left:791px;top:494px;"></div>
<div class="a cb cbd" style="left:809px;top:494px;"></div>
<div class="a cb cbd" style="left:827px;top:494px;"></div>
<div class="a f p" style="left:846px;top:491px;width:36px;height:19px;text-align:center;padding-left:0"></div>
<div class="a f p" style="left:882px;top:491px;width:36px;height:19px;text-align:center;padding-left:0"></div>
<div class="a f p" style="left:918px;top:491px;width:45px;height:19px;"></div>
<div class="a f " style="left:963px;top:491px;width:116px;height:19px;"></div>
<div class="a f  cl" style="left:1080px;top:491px;width:99px;height:19px;"></div>
<div class="a cb cbd" style="left:76px;top:511px;"></div>
<div class="a t" style="left:90px;top:512px;color:#401850">.</div>
<div class="a f n " style="left:93px;top:508px;width:27px;height:19px;"></div>
<div class="a f " style="left:121px;top:508px;width:42px;height:19px;"></div>
<div class="a f " style="left:164px;top:508px;width:64px;height:19px;"></div>
<div class="a f p" style="left:229px;top:508px;width:250px;height:19px;padding-left:2px"></div>
<div class="a f p" style="left:483px;top:508px;width:189px;height:19px;padding-left:2px"></div>
<div class="a f p" style="left:672px;top:508px;width:107px;height:19px;"></div>
<div class="a cb cbd" style="left:791px;top:513px;"></div>
<div class="a cb cbd" style="left:809px;top:513px;"></div>
<div class="a cb cbd" style="left:827px;top:513px;"></div>
<div class="a f p" style="left:846px;top:510px;width:36px;height:19px;text-align:center;padding-left:0"></div>
<div class="a f p" style="left:882px;top:510px;width:36px;height:19px;text-align:center;padding-left:0"></div>
<div class="a f p" style="left:918px;top:510px;width:45px;height:19px;"></div>
<div class="a f " style="left:963px;top:510px;width:116px;height:19px;"></div>
<div class="a f  cl" style="left:1080px;top:510px;width:99px;height:19px;"></div>
<div class="a cb cbd" style="left:76px;top:530px;"></div>
<div class="a t" style="left:90px;top:531px;color:#401850">.</div>
<div class="a f n " style="left:93px;top:527px;width:27px;height:19px;"></div>
<div class="a f " style="left:121px;top:527px;width:42px;height:19px;"></div>
<div class="a f " style="left:164px;top:527px;width:64px;height:19px;"></div>
<div class="a f p" style="left:229px;top:527px;width:250px;height:19px;padding-left:2px"></div>
<div class="a f p" style="left:483px;top:527px;width:189px;height:19px;padding-left:2px"></div>
<div class="a f p" style="left:672px;top:527px;width:107px;height:19px;"></div>
<div class="a cb cbd" style="left:791px;top:532px;"></div>
<div class="a cb cbd" style="left:809px;top:532px;"></div>
<div class="a cb cbd" style="left:827px;top:532px;"></div>
<div class="a f p" style="left:846px;top:529px;width:36px;height:19px;text-align:center;padding-left:0"></div>
<div class="a f p" style="left:882px;top:529px;width:36px;height:19px;text-align:center;padding-left:0"></div>
<div class="a f p" style="left:918px;top:529px;width:45px;height:19px;"></div>
<div class="a f " style="left:963px;top:529px;width:116px;height:19px;"></div>
<div class="a f  cl" style="left:1080px;top:529px;width:99px;height:19px;"></div>
<div class="a cb cbd" style="left:76px;top:549px;"></div>
<div class="a t" style="left:90px;top:550px;color:#401850">.</div>
<div class="a f n " style="left:93px;top:546px;width:27px;height:19px;"></div>
<div class="a f " style="left:121px;top:546px;width:42px;height:19px;"></div>
<div class="a f " style="left:164px;top:546px;width:64px;height:19px;"></div>
<div class="a f p" style="left:229px;top:546px;width:250px;height:19px;padding-left:2px"></div>
<div class="a f p" style="left:483px;top:546px;width:189px;height:19px;padding-left:2px"></div>
<div class="a f p" style="left:672px;top:546px;width:107px;height:19px;"></div>
<div class="a cb cbd" style="left:791px;top:551px;"></div>
<div class="a cb cbd" style="left:809px;top:551px;"></div>
<div class="a cb cbd" style="left:827px;top:551px;"></div>
<div class="a f p" style="left:846px;top:548px;width:36px;height:19px;text-align:center;padding-left:0"></div>
<div class="a f p" style="left:882px;top:548px;width:36px;height:19px;text-align:center;padding-left:0"></div>
<div class="a f p" style="left:918px;top:548px;width:45px;height:19px;"></div>
<div class="a f " style="left:963px;top:548px;width:116px;height:19px;"></div>
<div class="a f  cl" style="left:1080px;top:548px;width:99px;height:19px;"></div>
<div class="a cb cbd" style="left:76px;top:568px;"></div>
<div class="a t" style="left:90px;top:569px;color:#401850">.</div>
<div class="a f n " style="left:93px;top:565px;width:27px;height:19px;"></div>
<div class="a f " style="left:121px;top:565px;width:42px;height:19px;"></div>
<div class="a f " style="left:164px;top:565px;width:64px;height:19px;"></div>
<div class="a f p" style="left:229px;top:565px;width:250px;height:19px;padding-left:2px"></div>
<div class="a f p" style="left:483px;top:565px;width:189px;height:19px;padding-left:2px"></div>
<div class="a f p" style="left:672px;top:565px;width:107px;height:19px;"></div>
<div class="a cb cbd" style="left:791px;top:570px;"></div>
<div class="a cb cbd" style="left:809px;top:570px;"></div>
<div class="a cb cbd" style="left:827px;top:570px;"></div>
<div class="a f p" style="left:846px;top:567px;width:36px;height:19px;text-align:center;padding-left:0"></div>
<div class="a f p" style="left:882px;top:567px;width:36px;height:19px;text-align:center;padding-left:0"></div>
<div class="a f p" style="left:918px;top:567px;width:45px;height:19px;"></div>
<div class="a f " style="left:963px;top:567px;width:116px;height:19px;"></div>
<div class="a f  cl" style="left:1080px;top:567px;width:99px;height:19px;"></div>
<svg class="a" style="left:55px;top:298px" width="15" height="283" viewBox="0 0 15 283" ><rect x="1" y="8" width="1" height="267" fill="#fff"/><rect x="2" y="8" width="12" height="267" fill="#c8c8c8"/><rect x="14" y="8" width="1" height="267" fill="#d2d2d2"/><path d="M0.500 14.500 V7.500 A7 7 0 0 1 14.500 7.500 V14.500 Z" fill="#d8d8d8" stroke="#6d85ab" stroke-width="1"/><path d="M1.500 14 V7.500 A6 6 0 0 1 13.500 7.500" fill="none" stroke="#fff" stroke-width="1"/><path d="M0 14.500 H15" stroke="#4d6a99" stroke-width="1"/><path d="M1 15.500 H14" stroke="#fff" stroke-width="1"/><path d="M7.500 6 L11.200 10 H3.800Z" fill="#4a6592"/><path d="M0.500 267.5 V275.5 A7 7 0 0 0 14.500 275.5 V267.5 Z" fill="#d8d8d8" stroke="#8ea2c2" stroke-width="1"/><path d="M1.500 268 V275.5 A6 6 0 0 0 4 280" fill="none" stroke="#fff" stroke-width="1"/><path d="M1 267.5 H14" stroke="#4d6a99" stroke-width="1"/><path d="M2 268.5 H14" stroke="#fff" stroke-width="1"/><path d="M7.500 277 L11.200 273 H3.800Z" fill="#4a6592"/><rect x="10" y="102" width="1" height="1" fill="#fff"/><rect x="11" y="103" width="1" height="1" fill="#7388ab"/><rect x="10" y="110" width="1" height="1" fill="#fff"/><rect x="11" y="111" width="1" height="1" fill="#7388ab"/><rect x="10" y="118" width="1" height="1" fill="#fff"/><rect x="11" y="119" width="1" height="1" fill="#7388ab"/><rect x="10" y="126" width="1" height="1" fill="#fff"/><rect x="11" y="127" width="1" height="1" fill="#7388ab"/><rect x="10" y="134" width="1" height="1" fill="#fff"/><rect x="11" y="135" width="1" height="1" fill="#7388ab"/><rect x="10" y="142" width="1" height="1" fill="#fff"/><rect x="11" y="143" width="1" height="1" fill="#7388ab"/><rect x="10" y="150" width="1" height="1" fill="#fff"/><rect x="11" y="151" width="1" height="1" fill="#7388ab"/><rect x="10" y="158" width="1" height="1" fill="#fff"/><rect x="11" y="159" width="1" height="1" fill="#7388ab"/><rect x="10" y="166" width="1" height="1" fill="#fff"/><rect x="11" y="167" width="1" height="1" fill="#7388ab"/><rect x="5" y="106" width="1" height="1" fill="#fff"/><rect x="6" y="107" width="1" height="1" fill="#7388ab"/><rect x="5" y="114" width="1" height="1" fill="#fff"/><rect x="6" y="115" width="1" height="1" fill="#7388ab"/><rect x="5" y="122" width="1" height="1" fill="#fff"/><rect x="6" y="123" width="1" height="1" fill="#7388ab"/><rect x="5" y="130" width="1" height="1" fill="#fff"/><rect x="6" y="131" width="1" height="1" fill="#7388ab"/><rect x="5" y="138" width="1" height="1" fill="#fff"/><rect x="6" y="139" width="1" height="1" fill="#7388ab"/><rect x="5" y="146" width="1" height="1" fill="#fff"/><rect x="6" y="147" width="1" height="1" fill="#7388ab"/><rect x="5" y="154" width="1" height="1" fill="#fff"/><rect x="6" y="155" width="1" height="1" fill="#7388ab"/><rect x="5" y="162" width="1" height="1" fill="#fff"/><rect x="6" y="163" width="1" height="1" fill="#7388ab"/></svg>
<div class="a cb" style="left:94px;top:603px;"></div>
<div class="a bt" style="left:120px;top:591px;width:32px;height:32px;"></div>
<svg class="a" style="left:120px;top:591px" width="32" height="32" viewBox="0 0 32 32" ><path d="M16 12.5 L21.5 18 H10.5Z" fill="#000"/></svg>
<div class="a bt" style="left:157px;top:591px;width:32px;height:32px;"></div>
<svg class="a" style="left:157px;top:591px" width="32" height="32" viewBox="0 0 32 32" ><path d="M16 18.5 L21.5 13 H10.5Z" fill="#000"/></svg>
<div class="a bt" style="left:230px;top:591px;width:32px;height:32px;"></div>
<svg class="a" style="left:230px;top:591px" width="32" height="32" viewBox="0 0 32 32" ><rect x="8.500" y="8.500" width="15" height="4" fill="#fff" stroke="#9a9a9a" stroke-width="1"/><path d="M16 11.500h3v4h4v3h-4v4.500h-3v-4.500h-4v-3h4z" fill="#a0a0a0"/></svg>
<div class="a bt" style="left:269px;top:591px;width:32px;height:32px;"></div>
<svg class="a" style="left:269px;top:591px" width="32" height="32" viewBox="0 0 32 32" ><rect x="6.800" y="4.800" width="18.400" height="21.400" rx="3.500" fill="#ececec" stroke="#000" stroke-width="1.800"/><rect x="9.500" y="7.500" width="14" height="5" fill="#00ccff" stroke="#404040" stroke-width="0.8"/><rect x="9.0" y="14.5" width="3.6" height="2.400" rx="0.800" fill="#686868" stroke="#222" stroke-width="0.500"/><rect x="14.5" y="14.5" width="3.6" height="2.400" rx="0.800" fill="#686868" stroke="#222" stroke-width="0.500"/><rect x="20.0" y="14.5" width="3.6" height="2.400" rx="0.800" fill="#686868" stroke="#222" stroke-width="0.500"/><rect x="9.0" y="18.5" width="3.6" height="2.400" rx="0.800" fill="#686868" stroke="#222" stroke-width="0.500"/><rect x="14.5" y="18.5" width="3.6" height="2.400" rx="0.800" fill="#686868" stroke="#222" stroke-width="0.500"/><rect x="20.0" y="18.5" width="3.6" height="2.400" rx="0.800" fill="#686868" stroke="#222" stroke-width="0.500"/><rect x="9.0" y="22.5" width="3.6" height="2.400" rx="0.800" fill="#686868" stroke="#222" stroke-width="0.500"/><rect x="14.5" y="22.5" width="3.6" height="2.400" rx="0.800" fill="#686868" stroke="#222" stroke-width="0.500"/><rect x="20.0" y="22.5" width="3.6" height="2.400" rx="0.800" fill="#686868" stroke="#222" stroke-width="0.500"/></svg>
<div class="a bt" style="left:407px;top:591px;width:32px;height:32px;"></div>
<svg class="a" style="left:407px;top:591px" width="32" height="32" viewBox="0 0 32 32" ><path d="M8 11 V23.500 H12" fill="none" stroke="#000" stroke-width="2"/><path d="M8 15.300 H12" fill="none" stroke="#000" stroke-width="1.200"/><path d="M8 8.800 L10 12 H6Z" fill="#000"/><g fill="#2a8cff" stroke="#40d0ff" stroke-width="0.600"><rect x="4" y="5.500" width="17" height="3"/><rect x="12" y="13.500" width="17" height="3"/><rect x="12" y="22.300" width="17" height="3.400"/></g></svg>
<div class="a bt" style="left:446px;top:591px;width:32px;height:32px;background:#e8e8e8"></div>
<svg class="a" style="left:446px;top:591px" width="32" height="32" viewBox="0 0 32 32" ><g fill="#e4e4e4" stroke="#d0d0d0" stroke-width="1"><rect x="3.500" y="2.500" width="11" height="7"/><rect x="17.500" y="12.500" width="12" height="7"/><rect x="17.500" y="21.500" width="12" height="7"/></g><path d="M8.500 12 V24 H17 M8.500 15.500 H17" fill="none" stroke="#888" stroke-width="1.200"/><path d="M8.500 10 L11 13.500 H6Z" fill="#888"/></svg>
<div class="a l" style="left:576.9px;top:593px;transform-origin:0 50%;transform:scaleX(1.048);">Kontrolní součet</div>
<div class="a f d" style="left:672px;top:590px;width:107px;height:19px;"></div>
<div class="a t" style="left:713.6px;top:593px;transform-origin:0 50%;transform:scaleX(0.9827);">4 766 175.94</div>
<svg class="a" style="left:784px;top:592px" width="395" height="15" viewBox="0 0 395 15" ><rect x="0" y="0" width="395" height="15" fill="#95a3b8"/><rect x="15" y="0" width="254" height="15" fill="#8ea3c2"/><rect x="15" y="1" width="254" height="13" fill="#fff"/><rect x="16" y="2" width="253" height="12" fill="#ccc"/><rect x="269" y="0" width="1" height="15" fill="#5a7399"/><rect x="0" y="0" width="14" height="15" fill="#8ea3c2"/><path d="M14 1.500 H7.500 A6 6 0 0 0 7.500 13.5 H14 Z" fill="#d4d4d4"/><path d="M14 1.500 H7.500 A6 6 0 0 0 5 12.5" fill="none" stroke="#fff" stroke-width="1"/><rect x="14" y="0" width="1" height="15" fill="#4d6a99"/><path d="M6 7.5 L10.300 3.8 V11.2Z" fill="#4a6592"/><path d="M380 1 H386.5 A6.500 6.500 0 0 1 386.5 14 H380 Z" fill="#d4d4d4"/><rect x="380" y="1" width="1" height="13" fill="#fff"/><path d="M380 1.500 H386.5" stroke="#fff" stroke-width="1"/><path d="M389 7.5 L384.7 4.0 V11.0Z" fill="#4a6592"/><rect x="107" y="5" width="1" height="1" fill="#fff"/><rect x="108" y="6" width="1" height="1" fill="#7388ab"/><rect x="115" y="5" width="1" height="1" fill="#fff"/><rect x="116" y="6" width="1" height="1" fill="#7388ab"/><rect x="123" y="5" width="1" height="1" fill="#fff"/><rect x="124" y="6" width="1" height="1" fill="#7388ab"/><rect x="131" y="5" width="1" height="1" fill="#fff"/><rect x="132" y="6" width="1" height="1" fill="#7388ab"/><rect x="139" y="5" width="1" height="1" fill="#fff"/><rect x="140" y="6" width="1" height="1" fill="#7388ab"/><rect x="147" y="5" width="1" height="1" fill="#fff"/><rect x="148" y="6" width="1" height="1" fill="#7388ab"/><rect x="155" y="5" width="1" height="1" fill="#fff"/><rect x="156" y="6" width="1" height="1" fill="#7388ab"/><rect x="163" y="5" width="1" height="1" fill="#fff"/><rect x="164" y="6" width="1" height="1" fill="#7388ab"/><rect x="171" y="5" width="1" height="1" fill="#fff"/><rect x="172" y="6" width="1" height="1" fill="#7388ab"/><rect x="179" y="5" width="1" height="1" fill="#fff"/><rect x="180" y="6" width="1" height="1" fill="#7388ab"/><rect x="103" y="10" width="1" height="1" fill="#fff"/><rect x="104" y="11" width="1" height="1" fill="#7388ab"/><rect x="111" y="10" width="1" height="1" fill="#fff"/><rect x="112" y="11" width="1" height="1" fill="#7388ab"/><rect x="119" y="10" width="1" height="1" fill="#fff"/><rect x="120" y="11" width="1" height="1" fill="#7388ab"/><rect x="127" y="10" width="1" height="1" fill="#fff"/><rect x="128" y="11" width="1" height="1" fill="#7388ab"/><rect x="135" y="10" width="1" height="1" fill="#fff"/><rect x="136" y="11" width="1" height="1" fill="#7388ab"/><rect x="143" y="10" width="1" height="1" fill="#fff"/><rect x="144" y="11" width="1" height="1" fill="#7388ab"/><rect x="151" y="10" width="1" height="1" fill="#fff"/><rect x="152" y="11" width="1" height="1" fill="#7388ab"/><rect x="159" y="10" width="1" height="1" fill="#fff"/><rect x="160" y="11" width="1" height="1" fill="#7388ab"/><rect x="167" y="10" width="1" height="1" fill="#fff"/><rect x="168" y="11" width="1" height="1" fill="#7388ab"/><rect x="175" y="10" width="1" height="1" fill="#fff"/><rect x="176" y="11" width="1" height="1" fill="#7388ab"/><rect x="183" y="10" width="1" height="1" fill="#fff"/><rect x="184" y="11" width="1" height="1" fill="#7388ab"/></svg>
</body></html>
